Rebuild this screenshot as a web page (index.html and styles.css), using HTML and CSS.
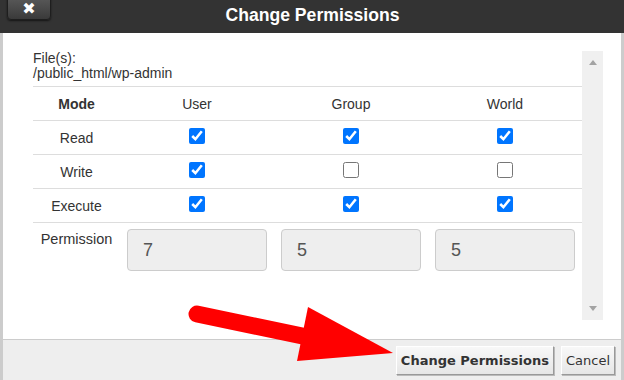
FILE: index.html
```html
<!DOCTYPE html>
<html lang="en">

<head>
    <meta charset="UTF-8">
    <meta name="viewport" content="width=device-width, initial-scale=1.0">
    <title>Change Permissions</title>
    <link rel="stylesheet" href="styles.css">
</head>

<body>
    <div class="dialog">
        <div class="dialog-title">
            <button class="close-btn" type="button">&#10006;</button>
            <h1>Change Permissions</h1>
        </div>

        <div class="dialog-body">
            <div class="perm-content">
                <p class="file-label">File(s):<br>/public_html/wp-admin</p>
                <table class="perm-table">
                    <colgroup>
                        <col class="col-mode">
                        <col class="col-who">
                        <col class="col-who">
                        <col class="col-who">
                    </colgroup>
                    <tr>
                        <th>Mode</th>
                        <td>User</td>
                        <td>Group</td>
                        <td>World</td>
                    </tr>
                    <tr>
                        <td>Read</td>
                        <td><input type="checkbox" checked></td>
                        <td><input type="checkbox" checked></td>
                        <td><input type="checkbox" checked></td>
                    </tr>
                    <tr>
                        <td>Write</td>
                        <td><input type="checkbox" checked></td>
                        <td><input type="checkbox"></td>
                        <td><input type="checkbox"></td>
                    </tr>
                    <tr>
                        <td>Execute</td>
                        <td><input type="checkbox" checked></td>
                        <td><input type="checkbox" checked></td>
                        <td><input type="checkbox" checked></td>
                    </tr>
                    <tr class="perm-row">
                        <td>Permission</td>
                        <td><input class="perm-input" type="text" value="7" disabled></td>
                        <td><input class="perm-input" type="text" value="5" disabled></td>
                        <td><input class="perm-input" type="text" value="5" disabled></td>
                    </tr>
                </table>
            </div>
            <div class="scrollbar">
                <span class="arrow-up"></span>
                <span class="arrow-down"></span>
            </div>
        </div>

        <div class="dialog-footer">
            <button class="btn btn-primary" type="button">Change Permissions</button>
            <button class="btn" type="button">Cancel</button>
        </div>

        <!-- annotation arrow pointing at the submit button -->
        <svg class="pointer-arrow" width="624" height="380" viewBox="0 0 624 380">
            <line x1="197" y1="314" x2="312" y2="338" stroke="#ff0000" stroke-width="17" stroke-linecap="round" />
            <polygon points="308,307 393,353 297,361" fill="#ff0000" />
        </svg>
    </div>
</body>

</html>
```

FILE: styles.css
```css
/* Page reset */
body {
    margin: 0;
    font-family: "Liberation Sans", Arial, sans-serif;
    color: #333;
}

.dialog {
    position: relative;
    width: 624px;
    height: 380px;
    display: flex;
    flex-direction: column;
    overflow: hidden;
}

/* Title bar */
.dialog-title {
    position: relative;
    height: 33px;
    background-color: #333;
    display: flex;
    align-items: center;
    justify-content: center;
}

.dialog-title h1 {
    margin: 0 0 2px;
    font-size: 17.6px;
    font-weight: bold;
    color: #fff;
    padding-left: 1px;
}

.close-btn {
    position: absolute;
    left: 7px;
    top: -4px;
    width: 44px;
    height: 24px;
    padding: 2px 0 0;
    border: 1px solid #1e1e1e;
    border-radius: 0 0 4px 4px;
    background: linear-gradient(#5a5a5a, #3a3a3a);
    box-shadow: 0 1px 2px rgba(0, 0, 0, 0.6), inset 0 1px 0 rgba(255, 255, 255, 0.15);
    color: #fff;
    font-size: 16px;
    line-height: 18px;
    font-weight: bold;
    font-family: "DejaVu Sans", sans-serif;
}

/* Body with content + fake scrollbar */
.dialog-body {
    flex: 1;
    display: flex;
    background-color: #fff;
    border-left: 3px solid #ccc;
    border-right: 3px solid #ccc;
    padding: 18px 18px 19px 30px;
}

.perm-content {
    flex: 1;
}

.file-label {
    margin: 0 0 5px;
    font-size: 14px;
    line-height: 15px;
}

.perm-table {
    width: 549px;
    table-layout: fixed;
    border-collapse: collapse;
    font-size: 14px;
}

.col-mode {
    width: 87px;
}

.col-who {
    width: 154px;
}

.perm-table tr {
    border-top: 1px solid #ddd;
}

.perm-table th,
.perm-table td {
    height: 33px;
    padding: 0;
    text-align: center;
    vertical-align: middle;
}

.perm-table input[type="checkbox"] {
    width: 16px;
    height: 16px;
    margin: 0;
    vertical-align: middle;
    position: relative;
    top: -2px;
}

.perm-row td {
    vertical-align: top;
    padding: 6px 7px 0;
    height: auto;
}

.perm-row td:first-child {
    padding: 8px 0 0;
    font-size: 14.5px;
}

.perm-input {
    box-sizing: border-box;
    width: 100%;
    height: 42px;
    padding: 0 15px;
    border: 1px solid #ccc;
    border-radius: 4px;
    background-color: #eee;
    font-family: "Liberation Sans", Arial, sans-serif;
    font-size: 18px;
    color: #555;
}

.scrollbar {
    width: 21px;
    background-color: #f0f0f0;
    display: flex;
    flex-direction: column;
    justify-content: space-between;
    align-items: center;
    padding: 9px 0 9px;
}

.arrow-up,
.arrow-down {
    width: 0;
    height: 0;
    border-left: 4px solid transparent;
    border-right: 4px solid transparent;
}

.arrow-up {
    border-bottom: 5px solid #a3a3a3;
}

.arrow-down {
    border-top: 5px solid #a3a3a3;
}

/* Footer buttons */
.dialog-footer {
    height: 40px;
    background-color: #eee;
    border-top: 1px solid #ccc;
    border-left: 3px solid #ccc;
    border-right: 3px solid #ccc;
    display: flex;
    justify-content: flex-end;
    align-items: center;
    gap: 7px;
    padding-right: 6px;
}

.btn {
    height: 29px;
    padding: 0 4px;
    font-family: "DejaVu Sans", Verdana, sans-serif;
    font-size: 13px;
    color: #333;
    background: linear-gradient(#f8f8f8, #e6e6e6);
    border: 1px solid;
    border-color: #fff #999 #999 #fff;
    box-shadow: 1px 1px 0 #bbb;
}

.btn-primary {
    font-weight: bold;
}

/* Annotation overlay */
.pointer-arrow {
    position: absolute;
    left: 0;
    top: 0;
    pointer-events: none;
}
```
